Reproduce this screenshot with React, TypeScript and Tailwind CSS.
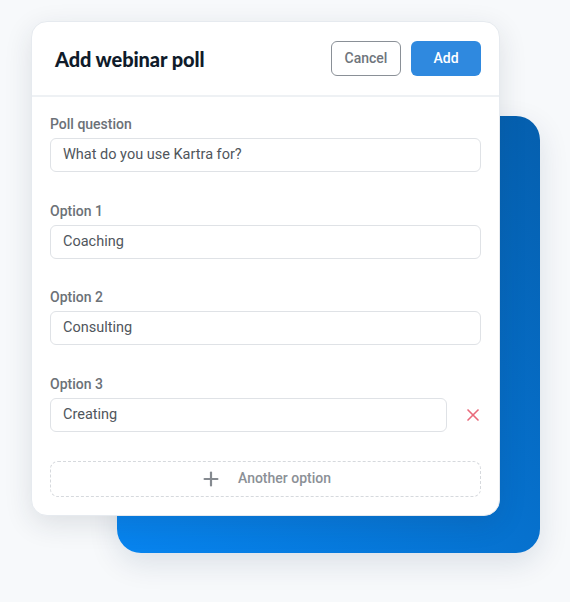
import { X, Plus } from 'lucide-react'

const fields = [
  { label: 'Poll question', value: 'What do you use Kartra for?', removable: false },
  { label: 'Option 1', value: 'Coaching', removable: false },
  { label: 'Option 2', value: 'Consulting', removable: false },
  { label: 'Option 3', value: 'Creating', removable: true },
]

export default function App() {
  return (
    <div className="relative w-full h-[602px] bg-[#f7f9fb] overflow-hidden" style={{ fontFamily: 'Roboto, "Noto Sans", sans-serif' }}>
      {/* Decorative blue panel */}
      <div className="absolute left-[117px] top-[116px] w-[423px] h-[437px] rounded-[24px] bg-gradient-to-tr from-[#0784ef] to-[#055fae] shadow-[0_10px_30px_rgba(20,40,80,0.12)]" />

      <div className="relative ml-[31px] pt-[21px] w-[469px]">
        <div className="bg-white rounded-[16px] border border-[#e6eaef] shadow-[0_8px_28px_rgba(30,40,60,0.12)]">
          {/* Header */}
          <div className="h-[75px] flex items-center justify-between pl-[23px] pr-[18px] border-b-2 border-[#eef1f4]">
            <h2 className="text-[20px] font-black text-[#0f1b2a] tracking-[-0.1px]" style={{ fontFamily: 'Lato, sans-serif' }}>
              Add webinar poll
            </h2>
            <div className="flex gap-[10px]">
              <button className="w-[70px] h-[35px] rounded-[6px] border border-[#8a9097] text-[14px] text-[#6f757c] font-medium bg-white">
                Cancel
              </button>
              <button className="w-[70px] h-[35px] rounded-[6px] bg-[#2f89df] text-[14px] text-white font-medium">
                Add
              </button>
            </div>
          </div>

          {/* Body */}
          <div className="px-[18px] pt-[17px] pb-[18px] flex flex-col">
            <div className="flex flex-col gap-[28.5px]">
              {fields.map((f) => (
                <div key={f.label}>
                  <div className="text-[14px] leading-[20px] font-medium text-[#6c7177] mb-[4px]">{f.label}</div>
                  <div className="flex items-center">
                    <div className="flex-1 h-[34px] rounded-[6px] border border-[#dfe2e6] px-[12px] flex items-center text-[14.5px] text-[#50565c]">
                      {f.value}
                    </div>
                    {f.removable && (
                      <div className="w-[34px] flex justify-end">
                        <X className="w-[20px] h-[20px] text-[#e96a7b] -mr-[2px]" strokeWidth={2} />
                      </div>
                    )}
                  </div>
                </div>
              ))}
            </div>

            <div className="mt-[29px] h-[36px] rounded-[8px] border border-dashed border-[#d6d9dd] flex items-center justify-center gap-[10px] text-[14px] font-medium text-[#8b9096]">
              <Plus className="w-[22px] h-[22px] text-[#858a90]" strokeWidth={2.4} />
              <span className="ml-[6px]">Another option</span>
            </div>
          </div>
        </div>
      </div>
    </div>
  )
}
